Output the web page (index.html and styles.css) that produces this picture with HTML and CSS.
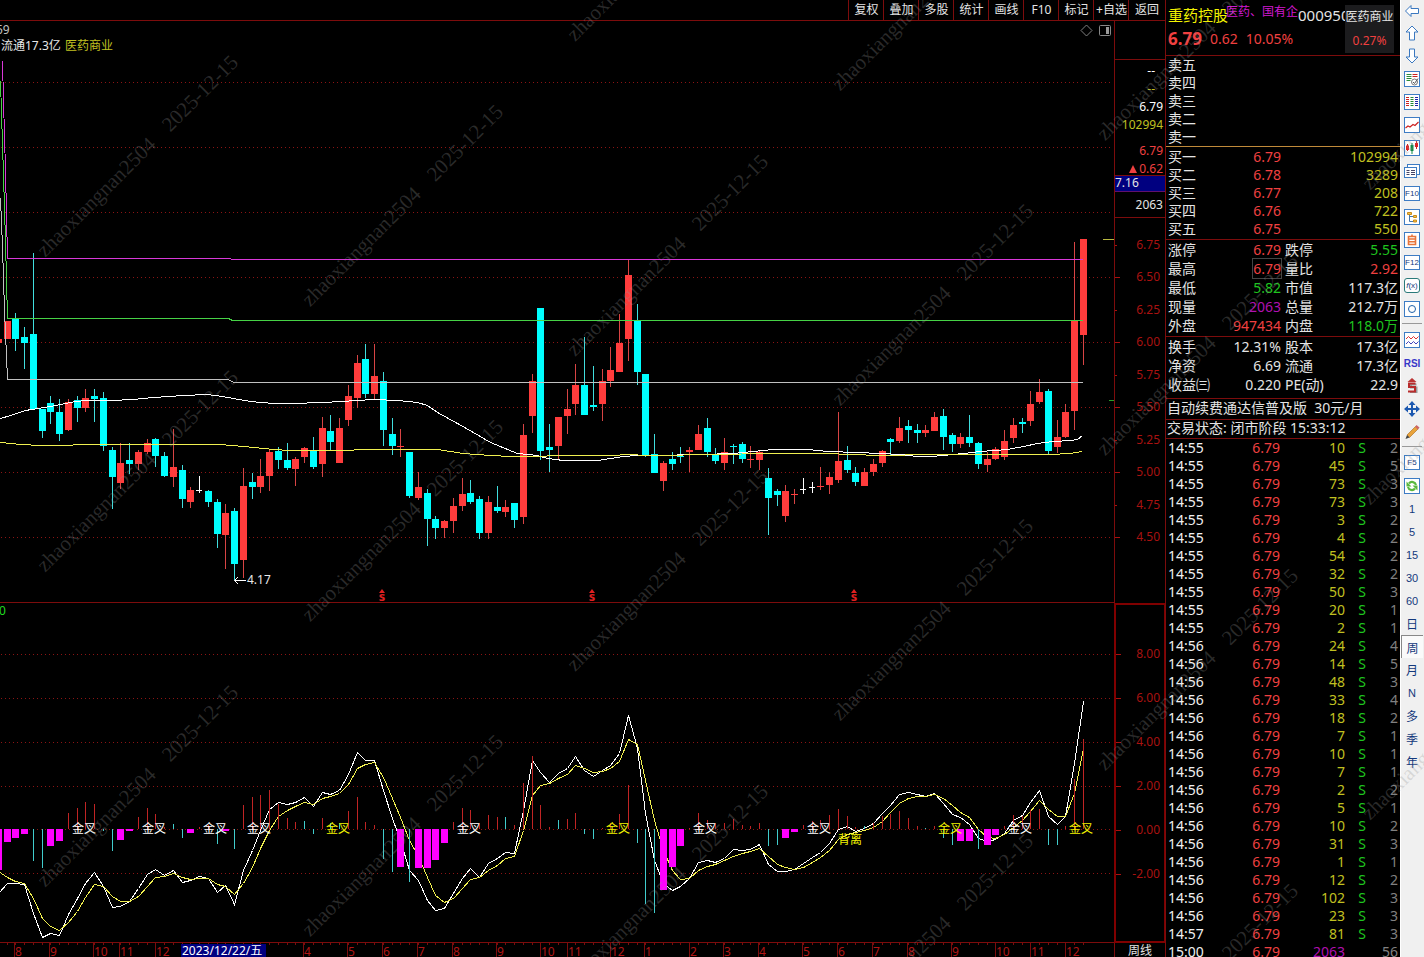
FILE: index.html
```html
<!DOCTYPE html>
<html lang="zh-CN">
<head>
<meta charset="utf-8">
<title>重药控股 000950 周线</title>
<link rel="stylesheet" href="styles.css">
</head>
<body>
<main class="main">
  <nav class="menu">
    <button>复权</button><button>叠加</button><button>多股</button><button>统计</button><button>画线</button><button>F10</button><button>标记</button><button>+自选</button><button>返回</button>
  </nav>
  <section class="charts">
    <svg class="chart" id="price" viewBox="0 21 1114 582" role="img" aria-label="周K线"></svg>
    <aside class="scale">
      <div class="scale-head"></div>
      <div class="scale-quote">
        <p class="white dash">--</p><p class="olive dash">--</p><p class="white">6.79</p><p class="olive">102994</p>
        <p class="red spaced">6.79</p><p class="red"><svg class="up" viewBox="0 0 8 8" aria-label="涨"><path d="M4 0L8 8H0Z"/></svg>0.62</p>
      </div>
      <div class="scale-cursor">7.16</div>
      <div class="scale-volume">2063</div>
      <ul class="ticks ticks-price">
        <li class="minor">6.75</li><li>6.50</li><li class="minor">6.25</li><li>6.00</li><li class="minor">5.75</li><li>5.50</li><li class="minor">5.25</li><li>5.00</li><li class="minor">4.75</li><li>4.50</li>
      </ul>
    </aside>
    <svg class="chart" id="macd" viewBox="0 603 1114 340" role="img" aria-label="MACD"></svg>
    <aside class="scale scale-macd">
      <ul class="ticks ticks-macd">
        <li>8.00</li><li>6.00</li><li>4.00</li><li>2.00</li><li>0.00</li><li>-2.00</li>
      </ul>
    </aside>
    <svg class="chart" id="dates" viewBox="0 943 1114 14" role="img" aria-label="日期"></svg>
    <aside class="scale period">周线</aside>
  </section>
</main>

<section class="quote">
  <header class="quote-head">
    <div class="quote-title">
      <div class="title-row"><h1>重药控股</h1><span class="tag">医药、国有企</span><span class="code">000950</span></div>
      <div class="change-row"><strong>6.79</strong><span>0.62</span><span>10.05%</span></div>
    </div>
    <div class="sector"><span>医药商业</span><span class="red">0.27%</span></div>
  </header>
  <table class="grid asks"><tbody>
    <tr><th>卖五</th></tr><tr><th>卖四</th></tr><tr><th>卖三</th></tr><tr><th>卖二</th></tr><tr><th>卖一</th></tr>
  </tbody></table>
  <table class="grid bids"><tbody>
    <tr><th>买一</th><td class="red">6.79</td><td class="olive">102994</td></tr>
    <tr><th>买二</th><td class="red">6.78</td><td class="olive">3289</td></tr>
    <tr><th>买三</th><td class="red">6.77</td><td class="olive">208</td></tr>
    <tr><th>买四</th><td class="red">6.76</td><td class="olive">722</td></tr>
    <tr><th>买五</th><td class="red">6.75</td><td class="olive">550</td></tr>
  </tbody></table>
  <table class="grid stats"><tbody>
    <tr><th>涨停</th><td class="red">6.79</td><th>跌停</th><td class="green">5.55</td></tr>
    <tr><th>最高</th><td class="red"><span class="boxed">6.79</span></td><th>量比</th><td class="red">2.92</td></tr>
    <tr><th>最低</th><td class="green">5.82</td><th>市值</th><td>117.3亿</td></tr>
    <tr><th>现量</th><td class="purple">2063</td><th>总量</th><td>212.7万</td></tr>
    <tr><th>外盘</th><td class="red">947434</td><th>内盘</th><td class="green">118.0万</td></tr>
  </tbody></table>
  <table class="grid stats funds"><tbody>
    <tr><th>换手</th><td>12.31%</td><th>股本</th><td>17.3亿</td></tr>
    <tr><th>净资</th><td>6.69</td><th>流通</th><td>17.3亿</td></tr>
    <tr><th>收益㈢</th><td>0.220</td><th>PE(动)</th><td>22.9</td></tr>
  </tbody></table>
  <p class="notice">自动续费通达信普及版&nbsp; 30元/月</p>
  <p class="status">交易状态: 闭市阶段 15:33:12</p>
  <table class="trades"><tbody id="trades"></tbody></table>
</section>

<nav class="tools">
  <button class="first" aria-label="后退"><svg viewBox="0 0 16 16"><path class="arrow" d="M1.500 8L7 2.500V5.500H14.500V10.500H7V13.500Z"/></svg></button>
  <button aria-label="上移"><svg viewBox="0 0 16 16"><path class="arrow" d="M8 1L14 7H10.500V15H5.500V7H2Z"/></svg></button>
  <button aria-label="下移"><svg viewBox="0 0 16 16"><path class="arrow" d="M8 15L14 9H10.500V1H5.500V9H2Z"/></svg></button>
  <button aria-label="报价"><svg viewBox="0 0 16 16"><rect class="frame" x=".5" y=".5" width="15" height="15"/><path stroke="#2a8a3a" d="M2.500 3.500h5M2.500 5.500h5M2.500 7.500h5M2.500 9.500h4"/><path stroke="#c22" d="M8.500 3.500h5M8.500 5.500h5"/><circle cx="10.500" cy="11" r="3" fill="#fff" stroke="#777"/><path fill="none" stroke="#555" d="M9 11l1.500 1.500 3.500-5"/></svg></button>
  <button aria-label="列表"><svg viewBox="0 0 16 16"><rect class="frame" x=".5" y=".5" width="15" height="15"/><path stroke="#c22" d="M2 3.500h3M2 5.500h3M2 7.500h3M2 9.500h3M2 11.500h3"/><path stroke="#283" d="M6.500 3.500h3M6.500 5.500h3M6.500 7.500h3M6.500 9.500h3M6.500 11.500h3"/><path stroke="#22a" d="M11 3.500h3M11 5.500h3M11 7.500h3M11 9.500h3M11 11.500h3"/></svg></button>
  <button aria-label="分时"><svg viewBox="0 0 16 16"><rect class="frame" x=".5" y=".5" width="15" height="15"/><path fill="none" stroke="#c22" stroke-width="1.200" d="M1.500 11l2.500-2 2 1L9 7.500l2 1L14.500 5"/></svg></button>
  <button aria-label="K线"><svg viewBox="0 0 16 16"><rect class="frame" x=".5" y=".5" width="15" height="15"/><path stroke="#c22" d="M3.500 4v7M12.500 1v8"/><path stroke="#184" d="M8 3v11"/><path fill="#d22" d="M2 5.500h3V10H2zM11 3h3v4h-3z"/><path fill="#184" d="M6.500 5h3v6h-3z"/></svg></button>
  <button aria-label="窗口"><svg viewBox="0 0 16 16"><rect class="frame" x="3.500" y="1.500" width="12" height="10"/><rect class="frame" x=".5" y="4.500" width="12" height="10"/><path stroke="#446" d="M2.500 7.500h3M7 7.500h4M2.500 9.500h3M7 9.500h4M2.500 11.500h3M7 11.500h4"/></svg></button>
  <button class="word framed">F10</button>
  <button aria-label="树形"><svg viewBox="0 0 16 16"><rect class="frame" x=".5" y=".5" width="15" height="15"/><path fill="none" stroke="#47a" d="M5.500 6v6.500H9M5.500 7.500H9"/><path fill="#f5c242" stroke="#c98a1a" d="M3.500 3.500h4v2h-4zM9.500 6.500h3v2h-3zM9.500 11h3v2h-3z"/></svg></button>
  <button aria-label="自选"><svg viewBox="0 0 16 16"><rect class="frame" x=".5" y=".5" width="15" height="15"/><path fill="none" stroke="#e8743a" stroke-width="1.600" d="M4.500 4.500h7v8h-7zM4.500 7h7M4.500 9.800h7M8 2.500v2"/></svg></button>
  <button class="word framed">F12</button>
  <button class="word framed round"><i>f</i>(x)</button>
  <button aria-label="圆"><svg viewBox="0 0 16 16"><rect class="frame" x=".5" y=".5" width="15" height="15"/><circle cx="8" cy="8" r="3.500" fill="none" stroke="#1c5fa8"/></svg></button>
  <hr>
  <button aria-label="指标"><svg viewBox="0 0 16 16"><rect class="frame" x=".5" y=".5" width="15" height="15"/><path fill="none" stroke="#d33" d="M2 7L4.500 4.500 7 7l2.500-2.500L12 7l2.500-2.500"/><path fill="none" stroke="#44b" d="M2 12l2.500-2.500L7 12l2.500-2.500L12 12l2.500-2.500"/></svg></button>
  <button class="word rsi">RSI</button>
  <button aria-label="除权"><svg viewBox="0 0 16 16"><path fill="#b33" d="M8 0l4.500 4h-9z"/><path fill="none" stroke="#999" stroke-width="2" d="M12.500 6.500H7v3h5.500v4.500H6"/><path fill="none" stroke="#b82c2c" stroke-width="2" d="M11.500 5.500H5v3.500h6v4.500H4"/></svg></button>
  <button aria-label="移动"><svg viewBox="0 0 16 16"><path fill="#1c58b0" d="M8 0l3.500 4h-7zM8 16l3.500-4h-7zM0 8l4-3.500v7zM16 8l-4-3.500v7zM7 4h2v3h3v2H9v3H7V9H4V7h3z"/></svg></button>
  <button aria-label="画笔"><svg viewBox="0 0 16 16"><path fill="#e9a33a" stroke="#a5671b" stroke-width=".6" d="M3 11L11.500 2.500l2.500 2.500L5.500 13.500z"/><path fill="#c66" d="M11 3l1.500-2 3 2.500-1.500 2z"/><path fill="#444" d="M3 11l-1.500 4 4-1.500z"/></svg></button>
  <hr>
  <button class="word framed">F5</button>
  <button aria-label="刷新"><svg viewBox="0 0 16 16"><rect class="frame" x=".5" y=".5" width="15" height="15"/><path fill="none" stroke="#5ab83e" stroke-width="2.200" d="M12 7a4 4 0 0 0-7-1.500M4 9a4 4 0 0 0 7 1.500"/><path fill="#5ab83e" d="M2.500 3.500v5h5zM13.500 12.500v-5h-5z"/></svg></button>
  <button class="word">1</button>
  <button class="word">5</button>
  <button class="word">15</button>
  <button class="word">30</button>
  <button class="word">60</button>
  <button class="word cjk">日</button>
  <button class="word cjk on">周</button>
  <button class="word cjk">月</button>
  <button class="word">N</button>
  <button class="word cjk">多</button>
  <button class="word cjk">季</button>
  <button class="word cjk">年</button>
</nav>
<svg class="watermark" id="watermark" aria-hidden="true"></svg>
<script src="chart.js"></script>
</body>
</html>
```
FILE: styles.css
```css
* { box-sizing: border-box; }
body {
  margin: 0;
  height: 100vh;
  display: flex;
  overflow: hidden;
  background: #000;
  color: #e4e4e4;
  font: 12px/18px "Noto Sans", "Noto Sans CJK SC", sans-serif;
}
p, h1, ul { margin: 0; padding: 0; }
button { font: inherit; color: inherit; background: none; border: 0; padding: 0; margin: 0; }
.red { color: #f04040; }
.green { color: #1fc41f; }
.olive { color: #c0c020; }
.purple { color: #b010b0; }
.white { color: #fff; }

.main { flex: 1; min-width: 0; display: flex; flex-direction: column; }
.menu { display: flex; justify-content: flex-end; height: 21px; border-bottom: 1px solid #7c0c0c; }
.menu button { width: 35px; padding-left: 1px; border-left: 1px solid #7c0c0c; white-space: nowrap; }
.menu button:last-child { width: 37px; padding: 0; }
.charts { display: grid; grid-template-columns: 1fr 51px; }
.chart { display: block; width: 100%; height: auto; font-size: 12px; overflow: visible; }
.scale { border-left: 1px solid #7c0c0c; position: relative; text-align: right; }
.scale-head { height: 39px; border-bottom: 1px solid #7c0c0c; }
.scale-quote { height: 116px; border-bottom: 1px solid #7c0c0c; padding: 2px 2px 0 0; }
.scale-quote p { height: 18px; line-height: 18px; }
.scale-quote .dash { padding-right: 8px; }
.scale-quote .spaced { margin-top: 8px; }
.up { width: 8px; height: 8px; margin-right: 2px; fill: #f04040; }
.scale-cursor { height: 16px; line-height: 14px; background: #000080; border-bottom: 1px solid #60106c; text-align: left; }
.scale-volume { height: 26px; line-height: 26px; border-bottom: 1px solid #7c0c0c; padding-right: 2px; }
.ticks { list-style: none; color: #a81210; display: flex; flex-direction: column; justify-content: space-between; padding-right: 5px; }
.ticks li { position: relative; line-height: 16px; }
.ticks li::before { content: ""; position: absolute; left: 0; top: 8px; width: 5px; height: 1px; background: #a81210; }
.ticks .minor::before { width: 2px; }
.ticks-price { height: 308px; margin-top: 19px; }
.scale-macd { border: 2px solid #800000; border-right-width: 1px; }
.ticks-macd { height: 236px; margin-top: 41px; padding-right: 4px; }
.period { text-align: center; line-height: 16px; height: 14px; }

.quote { width: 235px; height: 100vh; overflow: hidden; border-left: 1px solid #7c0c0c; font-size: 14px; }
.quote-head { display: flex; height: 56px; border-bottom: 1px solid #7c0c0c; padding-left: 2px; }
.quote-title { flex: 1; min-width: 0; overflow: hidden; white-space: nowrap; }
.title-row { display: flex; height: 30px; line-height: 30px; }
.title-row h1 { font-size: 15px; font-weight: 400; color: #f4f400; }
.tag { font-size: 12px; line-height: 24px; color: #d018d0; margin-left: -2px; }
.code { font-size: 15px; }
.change-row { display: flex; gap: 8px; line-height: 18px; font-size: 14px; color: #f04040; }
.change-row strong { font-size: 17px; }
.sector { width: 49px; height: 48px; margin: 5px 6px 0 0; background: #1c1c1e; font-size: 12px; line-height: 24px; text-align: center; display: flex; flex-direction: column; white-space: nowrap; }
.grid { width: 100%; table-layout: fixed; border-collapse: separate; border-spacing: 0; }
.grid th, .grid td { padding: 0; height: 18px; line-height: 18px; font-weight: 400; text-align: right; white-space: nowrap; }
.grid th { text-align: left; padding-left: 2px; width: 56px; }
.grid td { padding-right: 2px; }
.asks { border-bottom: 1px solid #c08a3a; }
.bids { padding: 1px 0; border-bottom: 1px solid #7c0c0c; }
.bids td:nth-child(2) { width: 61px; }
.stats { padding-bottom: 1px; border-bottom: 1px solid #7c0c0c; }
.stats th, .stats td { height: 19px; line-height: 19px; }
.stats td:nth-child(2) { width: 61px; }
.stats th:nth-child(3) { width: 53px; }
.boxed { outline: 1px solid #444; }
.funds { padding-bottom: 4px; }
.notice, .status { padding-left: 1px; border-bottom: 1px solid #7c0c0c; white-space: nowrap; }
.notice { height: 21px; line-height: 18px; }
.status { height: 19px; line-height: 16px; }
.trades { width: 100%; table-layout: fixed; border-collapse: collapse; }
.trades td { padding: 0; height: 18px; line-height: 18px; text-align: right; }
.trades td:first-child { text-align: left; padding-left: 2px; width: 60px; color: #f0f0f0; }
.trades td:nth-child(2) { width: 54px; }
.trades td:nth-child(3) { width: 65px; }
.trades td:nth-child(4) { width: 21px; }
.trades td:last-child { color: #808080; padding-right: 2px; }

.tools { width: 24px; padding-right: 1px; background: #f0f0f0; border-left: 1px solid #fff; display: flex; flex-direction: column; align-items: stretch; color: #14397c; }
.tools button { height: 23px; flex: none; display: flex; align-items: center; justify-content: center; }
.tools .first { height: 21px; }
.tools svg { width: 16px; height: 16px; }
.tools hr { width: 20px; height: 1px; margin: 3px auto 4px; border: 0; background: #999; flex: none; }
.frame { fill: #fff; stroke: #3d7cc4; }
.arrow { fill: #fff; stroke: #3a78c0; }
.word { font: 11px/13px "Liberation Sans", "Noto Sans CJK SC", sans-serif; }
.tools .word { padding-top: 2px; }
.tools .framed { width: 16px; height: 15px; margin: 4px auto; padding: 0; background: #fff; border: 1px solid #3d7cc4; font-size: 8px; }
.tools .round { border-radius: 3px; border-color: #2a7a7a; }
.tools .rsi { font-weight: 700; font-size: 10px; color: #3838c8; }
.tools .cjk { font-size: 12px; padding-top: 4px; }
.tools .on { background: #fafafa; border-left: 1px solid #888; border-top: 1px solid #888; }

.price-grid { stroke: #8c1414; stroke-dasharray: 1 3; shape-rendering: crispEdges; }
.frame-line { stroke: #7c0c0c; }
.line { fill: none; shape-rendering: crispEdges; }
.bars { shape-rendering: crispEdges; }
.month { fill: #b01616; }
.watermark { position: absolute; inset: 0; width: 100%; height: 100%; pointer-events: none; font: 21px "Liberation Serif", serif; fill: rgba(150, 150, 150, 0.28); }
```
FILE: chart.js
```js
const NS = 'http://www.w3.org/2000/svg';
const RED = '#ff3c3c', CYAN = '#00ffff', MAGENTA = '#ff00ff';
const $ = id => document.getElementById(id);

function add(parent, tag, attrs, text) {
  const node = document.createElementNS(NS, tag);
  for (const k in attrs) node.setAttribute(k, attrs[k]);
  if (text !== undefined) node.textContent = text;
  parent.appendChild(node);
  return node;
}
// Column centre of the i-th week; the first entry of each series is week -1.
const colX = i => Math.floor(7 + 8.75 * i);
const rect = (p, x, y, width, height, fill) => add(p, 'rect', { x, y, width, height, fill });
const gridLine = (p, y) => add(p, 'line', { class: 'price-grid', x1: 1, x2: 1112, y1: y + 0.5, y2: y + 0.5 });
const poly = (p, points, stroke) => add(p, 'polyline', { class: 'line', points, stroke, transform: 'translate(0.5 0.5)' });

// colour, high, body top, body bottom, low
const candles = `r339,339,343,343 r321,321,339,339 c313,319,339,351 c327,337,343,369 c253,334,409,409 c409,409,431,438
c396,403,412,424 c399,412,434,441 r399,402,430,431 c396,400,408,422 r389,398,408,412 c389,396,399,422 c392,398,446,451
c447,450,477,509 r443,463,483,489 c443,460,464,474 r450,452,464,470 r439,443,452,454 c438,439,456,467 c452,456,476,477
r429,467,477,487 c465,470,499,508 r487,490,502,508 w476,490,491,493 c490,491,502,507 c499,502,534,548 r504,513,535,569
c508,511,564,580 r468,486,560,578 c473,482,487,499 r459,476,487,493 r449,452,476,491 c447,451,460,469 c443,460,468,470
r457,459,469,486 r447,448,457,463 c437,451,467,469 r417,428,464,477 c415,431,442,450 r418,428,463,463 r385,396,420,426
r355,363,398,408 c344,359,394,398 r344,376,394,399 c372,381,430,446 c418,434,446,455 r429,446,447,457 c452,452,496,498
r472,487,498,500 c489,493,519,546 c516,519,528,539 r520,521,528,538 r498,506,521,533 r478,494,506,511 c480,493,502,504
c496,499,533,539 r496,502,533,539 c486,507,511,513 r500,507,512,517 c503,503,520,528 r424,435,517,524 r374,381,416,433
c308,308,451,460 c424,447,450,472 r417,417,446,459 r389,409,416,434 r364,385,404,415 c337,385,415,415 c366,405,407,411
r369,381,404,421 r347,370,381,387 r314,343,372,372 r259,275,339,361 c304,321,372,385 c374,374,455,457 c434,454,473,473
r461,463,481,491 c452,459,464,470 c447,456,457,463 r447,450,452,472 r425,434,450,450 c418,428,452,457 c448,454,461,464
r438,452,463,470 c444,446,447,464 c442,444,459,463 r446,459,460,468 r450,452,460,470 c468,478,498,535 c489,491,495,506
r485,491,516,522 r489,494,495,504 w478,489,490,494 w482,487,488,493 r467,486,487,490 r472,477,485,494 r412,461,480,483
c446,460,470,473 c467,473,482,486 r468,472,486,486 r459,464,472,476 r450,451,463,467 c438,439,442,455 r417,428,441,443
c420,426,430,443 c424,430,433,443 r425,430,433,437 r412,417,431,431 c409,416,437,450 c433,435,444,452 r433,437,444,448
c415,437,443,447 c442,443,464,469 r452,459,465,472 r447,449,459,460 r430,441,457,460 r418,425,438,443 c418,422,424,433
r391,404,421,426 r379,392,402,404 c389,391,451,454 r420,437,447,453 r404,412,437,438 r242,320,411,430 r239,239,335,365`.split(/\s+/);

const price = $('price');
for (let y = 82; y <= 537; y += 65) gridLine(price, y);
add(price, 'line', { class: 'frame-line', x1: 0, x2: 1114, y1: 602.5, y2: 602.5 });
const body = add(price, 'g', { class: 'bars' });
candles.forEach((c, n) => {
  const x = colX(n - 1), [hi, top, bot, lo] = c.slice(1).split(',').map(Number);
  const [wick, fill] = { r: ['#d84444', RED], c: ['#40dede', CYAN], w: ['#fff', '#fff'] }[c[0]];
  rect(body, x, hi, 1, lo - hi, wick);
  rect(body, x - 3, top, c[0] === 'w' ? 6 : 7, bot - top, fill);
});
poly(price, '2,61 3,100 5,170 7,258 230,258 231,259 1082,259', '#d838d8');
poly(price, '0,81 3,175 5,240 7,318 228,318 232,320 1082,320', '#46d246');
poly(price, '0,198 2,246 4,310 7,379 228,379 233,382 1082,382', '#c0c0c0');
poly(price, '0,418 10,415 25,410 50,406 75,401 87,400 110,400 133,399 153,397 183,395 207,394 222,396 233,398 250,401 273,403 290,403 323,402 357,400 373,399 397,400 417,402 427,405 437,412 457,423 473,432 490,442 517,453 537,455 547,458 563,460 597,460 623,456 637,455 653,455 700,454 733,453 753,451 773,449 807,449 827,451 857,452 880,453 900,454 917,456 930,456 943,455 963,453 980,451 1007,449 1023,446 1037,443 1053,441 1070,440 1077,439 1082,435', '#fff');
poly(price, '0,442 20,444 40,445 70,445 75,444 220,444 243,446 273,449 290,450 353,450 354,449 437,449 463,453 490,455 510,456 540,456 553,455 613,455 627,454 647,455 720,454 763,453 823,453 853,454 877,455 933,454 1050,454 1070,453 1082,451', '#f0f050');
rect(price, 1103, 239, 11, 1, '#b8b840');
rect(price, 1109, 400, 5, 1, '#28a028');
add(price, 'text', { x: -4, y: 34, fill: '#c0c0c0' }, '59');
add(price, 'text', { x: 1, y: 50, fill: '#e8e8e8' }, '流通17.3亿');
add(price, 'text', { x: 65, y: 50, fill: '#c0c020' }, '医药商业');
add(price, 'path', { d: 'M234.500 580.500H246M238 577L234.500 580.500L238 584', fill: 'none', stroke: '#fff' });
add(price, 'text', { x: 247, y: 584, fill: '#e8e8e8' }, '4.17');
add(price, 'path', { d: 'M1086.500 25L1092 30.500L1086.500 36L1081 30.500Z', fill: 'none', stroke: '#808080' });
add(price, 'rect', { x: 1099.5, y: 25.5, width: 11, height: 10, rx: 1, fill: 'none', stroke: '#888' });
rect(price, 1106, 27, 3, 7, '#999');
[382, 592, 854].forEach(x => {
  add(price, 'path', { d: `M${x} 589l3 4h-6z`, fill: '#e02020' });
  add(price, 'text', { x, y: 601, 'text-anchor': 'middle', 'font-size': 13, 'font-weight': 700, fill: '#e02020' }, 's');
});

// Histogram ends: m = wide magenta bar, c/r = thin cyan/red bar, all starting at the zero line.
const hist = `m870 m842 m838 m834 c861 c868 m846 m841 r813 r808 r802 r804 c831 c851 m840 m831 r817 r808 r814 r827 c824 c838
m833 r827 r825 c844 m831 c849 r805 r797 r795 r790 r804 r818 r822 c821 c834 r818 c823 c823 r811 r797 r822 r825 c859 c872
m867 c882 m868 m868 m860 m843 r822 r808 r810 r823 r815 r817 c817 r825 r783 r756 r805 r827 c820 r819 r813 c834 c839 r828
r823 r814 r785 c843 c904 c913 m890 m867 m846 r828 r813 r820 r823 r823 r819 r825 r826 r823 c846 c845 m838 m832 r825 r821
r820 r815 r809 r816 r827 c826 r823 r816 r814 r811 r818 r826 c828 r826 c838 c845 m841 m841 c849 m845 m835 r826 r815 r816
r810 r809 c845 c845 r826 r779 r739`.split(/\s+/);
const dif = [893,883,883,884,913,937,933,935,914,898,883,872,886,907,906,901,888,874,869,875,870,882,880,876,878,892,885,904,870,850,830,809,802,804,802,797,806,792,794,790,774,752,760,760,790,818,840,870,880,900,910,908,893,878,868,877,863,858,852,853,810,760,772,782,773,768,756,770,776,770,765,753,715,748,813,860,883,890,886,878,862,860,862,858,849,850,849,844,864,871,871,869,863,857,852,843,829,826,831,828,823,813,805,794,792,794,796,793,803,814,817,824,838,841,839,833,820,815,802,790,816,824,816,763,701];
const dea = [871,877,881,883,898,918,926,930,922,911,897,884,886,896,901,901,896,886,877,876,873,877,879,878,878,884,886,894,883,867,848,830,816,810,806,802,804,798,796,793,784,768,764,762,777,798,817,840,856,877,895,902,898,888,879,877,870,865,858,856,830,795,785,783,778,774,765,768,772,771,768,761,739,744,780,820,850,870,879,878,870,866,864,860,856,853,851,848,856,864,867,869,867,862,857,850,839,834,832,830,827,821,812,803,798,796,796,794,798,805,812,817,829,837,838,834,827,820,811,800,809,816,816,793,748];

const macd = $('macd');
[654, 698, 742, 786, 829, 873].forEach(y => gridLine(macd, y));
add(macd, 'line', { class: 'frame-line', x1: 0, x2: 1114, y1: 942.5, y2: 942.5 });
const series = values => values.map((y, n) => `${colX(n - 1)},${y}`).join(' ');
poly(macd, series(dif), '#fff');
poly(macd, series(dea), '#f0f050');
const bars = add(macd, 'g', { class: 'bars' });
hist.forEach((h, n) => {
  const x = colX(n - 1), end = +h.slice(1), y = Math.min(829, end), height = Math.abs(end - 829);
  if (h[0] === 'm') rect(bars, x - 3, y, 7, height, MAGENTA);
  else rect(bars, x, y, 1, height, h[0] === 'c' ? '#40cccc' : '#c02424');
});
[[72], [142], [203], [247], [326, 1], [457], [606, 1], [693], [807], [938, 1], [1008], [1069, 1]].forEach(([x, gold]) =>
  add(macd, 'text', { x, y: 833, fill: gold ? '#f4f400' : '#fff' }, '金叉'));
add(macd, 'text', { x: 838, y: 844, fill: '#f4f400' }, '背离');
add(macd, 'text', { x: -1, y: 615, fill: '#20d820' }, '0');

const dates = $('dates');
for (let i = 0; i < 124; i++) rect(dates, colX(i), 943, 1, 2, '#7c0c0c');
[[14, 8], [49, 9], [93, 10], [119, 11], [155, 12], [303, 4], [347, 5], [382, 6], [417, 7], [452, 8], [496, 9], [540, 10], [567, 11], [610, 12], [644, 1], [689, 2], [723, 3], [758, 4], [802, 5], [837, 6], [872, 7], [907, 8], [951, 9], [995, 10], [1030, 11], [1065, 12]].forEach(([x, m]) => {
  rect(dates, x, 943, 1, 14, '#7c0c0c');
  add(dates, 'text', { x: x + 1, y: 956, class: 'month' }, m);
});
rect(dates, 181, 944, 85, 13, '#000080');
add(dates, 'text', { x: 182, y: 955, fill: '#fff' }, '2023/12/22/五');

const ticks = '10/2 45/5 73/3 73/3 3/2 4/2 54/2 32/2 50/3 20/1 2/1 24/4 14/5 48/3 33/4 18/2 7/1 10/1 7/1 2/2 5/1 10/2 31/3 1/1 12/2 102/3 23/3 81/3 2063/56';
$('trades').innerHTML = ticks.split(' ').map((t, i) => {
  const [vol, n] = t.split('/');
  const time = i < 11 ? '14:55' : i < 27 ? '14:56' : i < 28 ? '14:57' : '15:00';
  const last = time === '15:00';
  return `<tr><td>${time}</td><td class="red">6.79</td><td class="${last ? 'purple' : 'olive'}">${vol}</td><td class="green">${last ? '' : 'S'}</td><td>${n}</td></tr>`;
}).join('');

for (let col = 0; col < 6; col++) {
  for (let row = -1; row < 4; row++) {
    const g = add($('watermark'), 'g', { transform: `translate(${45 + col * 265} ${258 + col * 49.6 + (row - (col > 1 ? 1 : 0)) * 315}) rotate(-45)` });
    add(g, 'text', { x: 0, y: 0 }, 'zhaoxiangnan2504');
    add(g, 'text', { x: 177, y: 0 }, '2025-12-15');
  }
}
```
